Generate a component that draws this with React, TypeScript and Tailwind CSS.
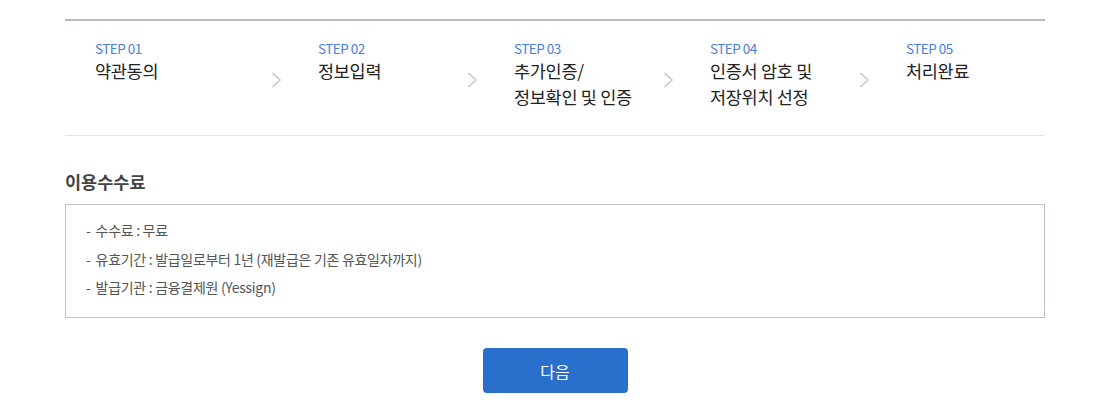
const STEPS = [
  { no: "01", lines: ["약관동의"] },
  { no: "02", lines: ["정보입력"] },
  { no: "03", lines: ["추가인증/", "정보확인 및 인증"] },
  { no: "04", lines: ["인증서 암호 및", "저장위치 선정"] },
  { no: "05", lines: ["처리완료"] },
];

const FEES = [
  "수수료 : 무료",
  "유효기간 : 발급일로부터 1년 (재발급은 기존 유효일자까지)",
  "발급기관 : 금융결제원 (Yessign)",
];

function Chevron() {
  return (
    <svg width="11" height="16" viewBox="0 0 11 16" className="absolute left-[10px] top-[51px]">
      <path d="M1.5 1 L9 8 L1.5 15" fill="none" stroke="#c9c9c9" strokeWidth="1.6" />
    </svg>
  );
}

export default function App() {
  return (
    <div
      className="min-h-[403px] bg-white"
      style={{ fontFamily: '"Noto Sans CJK KR", "Noto Sans", sans-serif' }}
    >
      <div className="ml-[65px] w-[980px] pt-[19px]">
        <ol className="grid grid-cols-5 border-t-2 border-b border-t-[#b5b9c8] border-b-[#e3e3e3] h-[117px]">
          {STEPS.map((s, i) => (
            <li key={s.no} className={`relative pt-[17px] ${i === 0 ? "pl-[30px]" : "pl-[57px]"}`}>
              {i > 0 && <Chevron />}
              <p className="text-[13.5px] leading-[20px] tracking-[-0.5px] text-[#4a7fdc]">STEP {s.no}</p>
              <p className="text-[17.5px] leading-[26px] tracking-[-0.3px] text-[#222]">
                {s.lines.map((l, j) => (
                  <span key={j} className="block">
                    {l}
                  </span>
                ))}
              </p>
            </li>
          ))}
        </ol>

        <h3 className="mt-[34px] text-[17.5px] font-bold leading-[24px] text-[#444]">이용수수료</h3>
        <ul className="mt-[10px] h-[114px] border border-[#bcbfd2] px-[20px] pt-[11px]">
          {FEES.map((f) => (
            <li key={f} className="text-[14px] leading-[28.5px] tracking-[-0.3px] text-[#555]">
              <span className="mr-[5px]">-</span>
              {f}
            </li>
          ))}
        </ul>

        <div className="mt-[30px] flex justify-center">
          <button className="h-[45px] w-[145px] rounded-[4px] bg-[#2b6fcd] text-[16px] text-white">다음</button>
        </div>
      </div>
    </div>
  );
}
